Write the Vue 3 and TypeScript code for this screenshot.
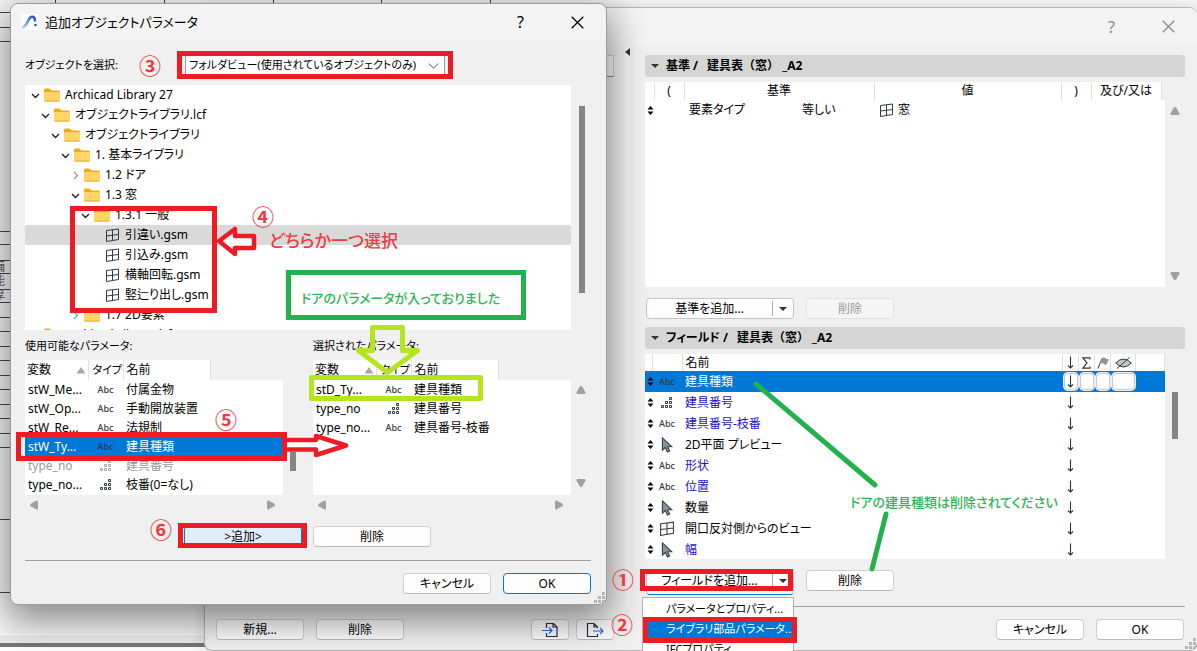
<script setup lang="ts">
import { ref } from 'vue'

type Kind = 'abc' | 'dots' | 'cursor' | 'window'

interface TreeNode {
  label: string
  level: number
  state: 'open' | 'closed' | 'leaf'
  selected?: boolean
}

interface Param {
  variable: string
  kind: Kind
  name: string
  selected?: boolean
  disabled?: boolean
}

interface Field {
  kind: Kind
  name: string
  linked: boolean
  selected?: boolean
}

const tree: TreeNode[] = [
  { label: 'Archicad Library 27', level: 0, state: 'open' },
  { label: 'オブジェクトライブラリ.lcf', level: 1, state: 'open' },
  { label: 'オブジェクトライブラリ', level: 2, state: 'open' },
  { label: '1. 基本ライブラリ', level: 3, state: 'open' },
  { label: '1.2 ドア', level: 4, state: 'closed' },
  { label: '1.3 窓', level: 4, state: 'open' },
  { label: '1.3.1 一般', level: 5, state: 'open' },
  { label: '引違い.gsm', level: 6, state: 'leaf', selected: true },
  { label: '引込み.gsm', level: 6, state: 'leaf' },
  { label: '横軸回転.gsm', level: 6, state: 'leaf' },
  { label: '竪辷り出し.gsm', level: 6, state: 'leaf' },
  { label: '1.7 2D要素', level: 4, state: 'closed' },
  { label: 'Archicad Library.lcf', level: 0, state: 'closed' },
]

const available: Param[] = [
  { variable: 'stW_Me...', kind: 'abc', name: '付属金物' },
  { variable: 'stW_Op...', kind: 'abc', name: '手動開放装置' },
  { variable: 'stW_Re...', kind: 'abc', name: '法規制' },
  { variable: 'stW_Ty...', kind: 'abc', name: '建具種類', selected: true },
  { variable: 'type_no', kind: 'dots', name: '建具番号', disabled: true },
  { variable: 'type_no...', kind: 'dots', name: '枝番(0=なし)' },
]

const chosen: Param[] = [
  { variable: 'stD_Ty...', kind: 'abc', name: '建具種類' },
  { variable: 'type_no', kind: 'dots', name: '建具番号' },
  { variable: 'type_no...', kind: 'abc', name: '建具番号-枝番' },
]

const panes = [
  { title: '使用可能なパラメータ:', rows: available, thumb: true },
  { title: '選択されたパラメータ:', rows: chosen, thumb: false },
]

const fields: Field[] = [
  { kind: 'abc', name: '建具種類', linked: true, selected: true },
  { kind: 'dots', name: '建具番号', linked: true },
  { kind: 'abc', name: '建具番号-枝番', linked: true },
  { kind: 'cursor', name: '2D平面 プレビュー', linked: false },
  { kind: 'abc', name: '形状', linked: true },
  { kind: 'abc', name: '位置', linked: true },
  { kind: 'cursor', name: '数量', linked: false },
  { kind: 'window', name: '開口反対側からのビュー', linked: false },
  { kind: 'cursor', name: '幅', linked: true },
]

const view = ref('folder')
const rulesY = [12, 27, 41, 231, 244, 260, 273, 289, 302, 317, 331, 346, 360, 375, 389, 404, 418, 433, 447, 519, 592]
const rulesX = [55, 164, 273, 381, 490]
</script>

<template>
  <div class="desktop">
    <svg class="defs" width="0" height="0" aria-hidden="true">
      <symbol id="i-window" viewBox="0 0 15 14">
        <path d="M1.500 2.500 13.500 1v10.500L1.500 13.500zM7.500 1.800v10.800M1.500 8l12-1.500" fill="none" stroke="#2f3b45" stroke-width="1" />
      </symbol>
      <symbol id="i-dots" viewBox="0 0 12 12">
        <path d="M8.5.5h2v2h-2zM8.5 4.5h2v2h-2zM4.5 4.5h2v2h-2zM8.5 8.5h2v2h-2zM4.5 8.5h2v2h-2zM.5 8.5h2v2h-2z" fill="none" stroke="currentColor" stroke-width="1" />
      </symbol>
      <symbol id="i-cursor" viewBox="0 0 12 14">
        <path d="M2 .8v10.700l2.500-2.300 1.900 4 2-1-1.900-3.700h3.600z" fill="#8b9399" stroke="#3c464e" stroke-width="1" />
      </symbol>
      <symbol id="i-folder" viewBox="0 0 16 14">
        <path d="M0 2Q0 .5 1.500.5H5.500L7.500 2.500H14.500Q16 2.500 16 4V6H0z" fill="#f0ab0c" />
        <path d="M0 5Q0 4 1 4H15Q16 4 16 5V12Q16 13.500 14.500 13.500H1.500Q0 13.500 0 12z" fill="#ffd567" />
        <path d="M.5 13H15.500" stroke="#e8ab2c" stroke-width="1" />
      </symbol>
      <symbol id="i-sort" viewBox="0 0 7 9">
        <path d="M3.500 0 6.500 3.500H.5zM3.500 9 .5 5.500h6z" fill="#000" />
      </symbol>
      <symbol id="i-down" viewBox="0 0 7 13">
        <path d="M3.500.5v11M1 9.500l2.500 2.500L6 9.500" fill="none" stroke="#2a3742" stroke-width="1.100" />
      </symbol>
      <symbol id="i-tri" viewBox="0 0 10 8">
        <path d="M5 0Q6 .2 6.500 1L9.500 6.500Q9.500 8 8.500 8H1.500Q.5 8 .5 6.500L3.500 1Q4 .2 5 0z" fill="#a0a0a0" />
      </symbol>
      <symbol id="i-grip" viewBox="0 0 12 12">
        <path d="M8 0h3v3H8zM4 4h3v3H4zM8 4h3v3H8zM0 8h3v3H0zM4 8h3v3H4zM8 8h3v3H8z" fill="#b5b5b5" />
      </symbol>
      <symbol id="i-x" viewBox="0 0 13 13">
        <path d="M.7.7 12.300 12.300M12.300.7.7 12.300" fill="none" stroke="currentColor" stroke-width="1.300" />
      </symbol>
      <linearGradient id="logo-ink" x1="0" y1="1" x2="1" y2="0">
        <stop offset="0" stop-color="#b9cdf5" />
        <stop offset="0.600" stop-color="#5584de" />
        <stop offset="1" stop-color="#2350b4" />
      </linearGradient>
    </svg>

    <div class="sheet" aria-hidden="true">
      <svg class="sheet-lines">
        <path v-for="y in rulesY" :key="'y' + y" :d="`M0 ${y + 0.5}H12`" />
        <path v-for="x in rulesX" :key="'x' + x" :d="`M${x + 0.5} 0V12`" />
      </svg>
      <div class="sheet-text"><span>備</span><span>能</span><span>厚</span></div>
      <div class="sheet-foot"></div>
    </div>

    <section class="dialog back" aria-label="一覧表設定">
      <header class="titlebar">
        <span class="grow"></span>
        <button class="cap" type="button" aria-label="ヘルプ">?</button>
        <button class="cap" type="button" aria-label="閉じる"><svg width="13" height="13"><use href="#i-x" /></svg></button>
      </header>
      <div class="back-body">
        <div class="side"><input class="stub" type="text" aria-label="検索" /></div>
        <div class="splitter"><svg width="5" height="8" viewBox="0 0 5 8"><path d="M5 0v8L0 4z" fill="#333" /></svg></div>
        <div class="settings">
          <h2 class="bar"><i class="caret"></i><span>基準 /</span><span class="full">建具表（窓） _A2</span></h2>
          <div class="area">
            <div class="sheetbox">
              <table class="criteria">
                <colgroup><col class="w9" /><col class="w30" /><col class="w113" /><col class="w77" /><col /><col class="w30" /><col class="w70" /><col class="w4" /></colgroup>
                <thead>
                  <tr><th></th><th>(</th><th colspan="2">基準</th><th>値</th><th>)</th><th>及び/又は</th><th class="blank"></th></tr>
                </thead>
                <tbody>
                  <tr>
                    <td class="grab"><svg width="7" height="9"><use href="#i-sort" /></svg></td>
                    <td></td><td class="pad">要素タイプ</td><td class="pad">等しい</td>
                    <td class="pad"><span class="val"><svg width="15" height="14"><use href="#i-window" /></svg>窓</span></td>
                    <td></td><td></td><td></td>
                  </tr>
                </tbody>
              </table>
            </div>
            <div class="vscroll ends">
              <svg width="10" height="8"><use href="#i-tri" /></svg>
              <svg class="flip" width="10" height="8"><use href="#i-tri" /></svg>
            </div>
          </div>
          <div class="actions">
            <div class="split"><button type="button">基準を追加...</button><button class="drop" type="button" aria-label="基準の種類"><i class="caret"></i></button></div>
            <button class="btn" type="button" disabled>削除</button>
          </div>
          <h2 class="bar"><i class="caret"></i><span>フィールド /</span><span class="full">建具表（窓） _A2</span></h2>
          <div class="area">
            <div class="sheetbox">
              <table class="fields">
                <colgroup><col class="w7" /><col class="w30" /><col /><col class="w16" /><col class="w16" /><col class="w16" /><col class="w25" /><col class="w28" /></colgroup>
                <thead>
                  <tr>
                    <th></th><th></th><th class="name">名前</th>
                    <th aria-label="並べ替え"><svg width="7" height="13"><use href="#i-down" /></svg></th>
                    <th aria-label="合計"><svg width="9" height="12" viewBox="0 0 9 12"><path d="M8 2.500V.8H.8L5 6 .8 11.200H8V9.500" fill="none" stroke="#2a3742" stroke-width="1.200" /></svg></th>
                    <th aria-label="フラグ"><svg width="12" height="12" viewBox="0 0 12 12"><path d="M1 11.500 5 1.500" stroke="#2a3742" stroke-width="1" /><path d="M5 1q2-1.200 3.500.2T12 2L9.500 7.500Q8 8 6.500 6.800T2.800 6.500z" fill="#8e959a" /></svg></th>
                    <th aria-label="非表示"><svg width="17" height="12" viewBox="0 0 17 12"><path d="M.7 6Q8.500-2 16.300 6 8.500 14 .7 6z" fill="#c4c7c9" stroke="#2a3742" /><path d="M2 11.500 14.500.5" stroke="#2a3742" /></svg></th>
                    <th></th>
                  </tr>
                </thead>
                <tbody>
                  <tr v-for="f in fields" :key="f.name" :class="{ sel: f.selected, linked: f.linked }">
                    <td class="grab"><svg width="7" height="9"><use href="#i-sort" /></svg></td>
                    <td class="mid kind">
                      <span v-if="f.kind === 'abc'" class="abc">Abc</span>
                      <svg v-else-if="f.kind === 'dots'" width="12" height="12"><use href="#i-dots" /></svg>
                      <svg v-else-if="f.kind === 'cursor'" width="14" height="16"><use href="#i-cursor" /></svg>
                      <svg v-else width="16" height="15"><use href="#i-window" /></svg>
                    </td>
                    <td class="name">{{ f.name }}</td>
                    <td class="mid">
                      <button v-if="f.selected" class="cell" type="button" aria-label="昇順"><svg width="7" height="13"><use href="#i-down" /></svg></button>
                      <svg v-else width="7" height="13"><use href="#i-down" /></svg>
                    </td>
                    <td><button v-if="f.selected" class="cell" type="button" aria-label="合計"></button></td>
                    <td><button v-if="f.selected" class="cell" type="button" aria-label="フラグ"></button></td>
                    <td><button v-if="f.selected" class="cell" type="button" aria-label="非表示"></button></td>
                    <td></td>
                  </tr>
                </tbody>
              </table>
            </div>
            <div class="vscroll"><i class="thumb fields-thumb"></i></div>
          </div>
          <div class="actions">
            <div class="split active">
              <button type="button">フィールドを追加...</button><button class="drop" type="button" aria-label="フィールドの種類"><i class="caret"></i></button>
              <ul class="menu">
                <li><button type="button">パラメータとプロパティ...</button></li>
                <li><button class="on" type="button">ライブラリ部品パラメータ...</button></li>
                <li><button type="button">IFCプロパティ...</button></li>
              </ul>
            </div>
            <button class="btn" type="button">削除</button>
          </div>
          <hr />
        </div>
      </div>
      <footer class="back-foot">
        <button class="btn" type="button">新規...</button>
        <button class="btn" type="button">削除</button>
        <button class="btn icon first" type="button" aria-label="読み込み">
          <svg width="17" height="16" viewBox="0 0 17 16"><path d="M4.500 6V1.500h7l3.500 3.500v9.500H4.500V11M11 1.500V5h4" fill="none" stroke="#26333d" stroke-width="1.200" /><path d="M0 8.500h10M7 5.500l3 3-3 3" fill="none" stroke="#1f6fe0" stroke-width="1.200" /></svg>
        </button>
        <button class="btn icon" type="button" aria-label="書き出し">
          <svg width="18" height="16" viewBox="0 0 18 16"><path d="M11.500 6V5L8 1.500H1.500v13h10V12M8 1.500V5h3.500" fill="none" stroke="#26333d" stroke-width="1.200" /><path d="M7 9h10M14 6l3 3-3 3" fill="none" stroke="#1f6fe0" stroke-width="1.200" /></svg>
        </button>
        <span class="grow"></span>
        <button class="btn" type="button">キャンセル</button>
        <button class="btn" type="button">OK</button>
      </footer>
      <svg class="grip" width="12" height="12"><use href="#i-grip" /></svg>
    </section>

    <section class="dialog front" aria-labelledby="front-title">
      <header class="titlebar">
        <svg class="logo" width="17" height="16" viewBox="0 0 17 16"><rect width="17" height="16" fill="#fbfcfe" /><path d="M2 13.500C5 12 6 9 7.500 6 9.500 1.500 13.500 1.500 14 6.500" fill="none" stroke="url(#logo-ink)" stroke-width="2.600" stroke-linecap="round" /><circle cx="14.500" cy="11" r="1.200" fill="#1d3f94" /></svg>
        <h1 id="front-title">追加オブジェクトパラメータ</h1>
        <button class="cap" type="button" aria-label="ヘルプ">?</button>
        <button class="cap" type="button" aria-label="閉じる"><svg width="13" height="13"><use href="#i-x" /></svg></button>
      </header>
      <div class="front-body">
        <div class="pick">
          <label for="view">オブジェクトを選択:</label>
          <div class="selectbox">
            <select id="view" v-model="view"><option value="folder">フォルダビュー(使用されているオブジェクトのみ)</option></select>
            <svg width="11" height="6" viewBox="0 0 11 6"><path d="M.8.5 5.500 5.200 10.200.5" fill="none" stroke="#555" /></svg>
          </div>
        </div>
        <div class="area">
          <ul class="tree">
            <li v-for="(n, i) in tree" :key="i" :class="{ sel: n.selected }" :style="{ paddingLeft: n.level * 10 + 6 + 'px' }">
              <svg v-if="n.state === 'open'" class="chev" width="9" height="9" viewBox="0 0 9 9"><path d="M1 3l3.500 3.500L8 3" fill="none" stroke="#222" stroke-width="1.400" /></svg>
              <svg v-else-if="n.state === 'closed'" class="chev" width="9" height="9" viewBox="0 0 9 9"><path d="M3 1l3.500 3.500L3 8" fill="none" stroke="#999" stroke-width="1.300" /></svg>
              <svg v-if="n.state === 'leaf'" class="leaf" width="15" height="14"><use href="#i-window" /></svg>
              <svg v-else class="folder" width="16" height="14"><use href="#i-folder" /></svg>
              {{ n.label }}
            </li>
          </ul>
          <div class="vscroll"><i class="thumb tree-thumb"></i></div>
        </div>
        <div class="panes">
          <div v-for="p in panes" :key="p.title" class="pane">
            <h2>{{ p.title }}</h2>
            <div class="area">
              <div class="list">
                <table class="params">
                  <colgroup><col class="w63" /><col class="w35" /><col class="w87" /><col /></colgroup>
                  <thead>
                    <tr><th><span class="sorted">変数<svg width="10" height="8" viewBox="0 0 10 8"><path d="M5 1 9.500 7.500h-9z" fill="#a8a8a8" /></svg></span></th><th>タイプ</th><th>名前</th><th class="none"></th></tr>
                  </thead>
                  <tbody>
                    <tr v-for="r in p.rows" :key="r.variable" :class="{ sel: r.selected, off: r.disabled }">
                      <td>{{ r.variable }}</td>
                      <td class="mid kind"><span v-if="r.kind === 'abc'" class="abc">Abc</span><svg v-else width="12" height="12"><use href="#i-dots" /></svg></td>
                      <td colspan="2">{{ r.name }}</td>
                    </tr>
                  </tbody>
                </table>
              </div>
              <div class="vscroll" :class="{ ends: !p.thumb }">
                <i v-if="p.thumb" class="thumb list-thumb"></i>
                <template v-else>
                  <svg width="10" height="8"><use href="#i-tri" /></svg>
                  <svg class="flip" width="10" height="8"><use href="#i-tri" /></svg>
                </template>
              </div>
            </div>
            <div class="hscroll">
              <svg class="left" width="10" height="8"><use href="#i-tri" /></svg>
              <svg class="right" width="10" height="8"><use href="#i-tri" /></svg>
            </div>
          </div>
        </div>
        <div class="transfer">
          <button class="btn add" type="button">&gt;追加&gt;</button>
          <button class="btn" type="button">削除</button>
        </div>
        <hr />
        <div class="confirm">
          <button class="btn" type="button">キャンセル</button>
          <button class="btn primary" type="button">OK</button>
        </div>
      </div>
      <svg class="grip" width="12" height="12"><use href="#i-grip" /></svg>
    </section>

    <svg class="marks" aria-hidden="true">
      <g fill="none" stroke="#ed1c24" stroke-width="5">
        <rect x="179.500" y="53.500" width="271" height="23" />
        <rect x="72.500" y="208.500" width="142" height="102" />
        <rect x="18.500" y="434.500" width="266" height="24" />
        <rect x="180.500" y="525.500" width="124" height="20" />
        <rect x="642.500" y="571.500" width="148" height="17" />
        <rect x="645.500" y="619.500" width="149" height="21" />
      </g>
      <path d="M219 241l16-12v7h19v12h-19v6z" fill="#fff" stroke="#ed1c24" stroke-width="4.500" stroke-linejoin="round" />
      <path d="M287 440h29v-4l30 9.500-30 9.500v-5.500h-29" fill="#fff" stroke="#ed1c24" stroke-width="4.500" stroke-linejoin="round" />
      <rect x="288.500" y="272.500" width="235" height="45" fill="#fff" stroke="#22b14c" stroke-width="5" />
      <g fill="none" stroke="#b5e61d" stroke-width="5" stroke-linejoin="round">
        <rect x="311.500" y="377.500" width="169" height="21" />
        <path d="M372.500 327.500h30v23h15l-30 22-29-22h14z" />
      </g>
      <path d="M756 384 875 485M886 514l-14 55" fill="none" stroke="#22b14c" stroke-width="5" stroke-linecap="round" />
    </svg>
    <span class="num n1">①</span>
    <span class="num n2">②</span>
    <span class="num n3">③</span>
    <span class="num n4">④</span>
    <span class="num n5">⑤</span>
    <span class="num n6">⑥</span>
    <p class="note choose">どちらか一つ選択</p>
    <p class="note door">ドアのパラメータが入っておりました</p>
    <p class="note remove">ドアの建具種類は削除されてください</p>
  </div>
</template>

<style>
body { margin: 0; }
</style>

<style scoped>
.desktop {
  position: relative;
  height: 100vh;
  overflow: hidden;
  background: #f4f4f4;
  color: #000;
  font: 12px/18px "Noto Sans", "Noto Sans CJK JP", sans-serif;
  font-feature-settings: "palt";
}
.desktop * { box-sizing: border-box; }
.defs { position: absolute; }
svg { display: block; flex: none; }
button, select, input { font: inherit; color: inherit; font-feature-settings: inherit; margin: 0; padding: 0; }
h1, h2, p, ul { margin: 0; padding: 0; font-size: inherit; font-weight: 400; list-style: none; }
hr { border: 0; height: 1px; background: #a0a0a0; margin: 0; width: 100%; }
.grow { flex: 1; }

.sheet { position: absolute; inset: 0; background: #f7f7f7; }
.sheet-lines { position: absolute; inset: 0; width: 100%; height: 100%; stroke: #444; fill: none; }
.sheet-text { position: absolute; left: -7px; top: 260px; display: flex; flex-direction: column; line-height: 14px; color: #555; }
.sheet-foot { position: absolute; left: 0; right: 0; bottom: 0; height: 17px; border-top: 1px solid #fff; background: linear-gradient(#ececec 8px, #777 8px, #777 12px, #fff 12px); }

.dialog { position: absolute; display: flex; flex-direction: column; background: #f0f0f0; border: 1px solid #9c9c9c; border-radius: 8px; }
.titlebar { display: flex; align-items: center; background: #f3f3f3; border-radius: 8px 8px 0 0; }
.cap { display: grid; place-items: center; width: 57px; height: 100%; border: 0; background: none; font-size: 16px; }

.back { left: 204px; right: 0; top: 7px; min-height: calc(100vh - 7px); border-right: 0; border-color: #b4b4b4; box-shadow: 0 0 16px rgba(0, 0, 0, 0.15); }
.back .titlebar { height: 37px; color: #8a8a8a; }
.back-body { display: flex; flex: 1; }
.side { width: 420px; padding-top: 10px; }
.stub { display: block; width: 409px; height: 22px; border: 1px solid #d0d0d0; border-bottom-color: #888; background: #fafafa; }
.splitter { width: 5px; padding-top: 3px; background: #f6f6f6; }
.settings { flex: 1; min-width: 0; padding: 10px 12px 0 15px; }
.bar { display: flex; align-items: center; height: 22px; margin-bottom: 5px; padding-left: 6px; border-radius: 3px; background: #d5d5d5; font-weight: 700; white-space: pre; }
.bar .caret { margin-right: 7px; }
.bar .full { margin-left: 9px; font-feature-settings: normal; }
.caret { width: 0; border: 4px solid transparent; border-top-color: #333; border-bottom: 0; }
.settings .area { height: 205px; margin-bottom: 11px; }

.area { display: flex; }
.sheetbox { flex: 1; min-width: 0; background: #fff; overflow: hidden; }
.vscroll { display: flex; flex-direction: column; align-items: center; width: 20px; }
.vscroll.ends { justify-content: space-between; padding: 25px 1px 7px 0; }
.flip { transform: rotate(180deg); }
.thumb { width: 6px; background: #858585; }
.fields-thumb { height: 47px; margin: 38px 0 0 0; }

table { width: 100%; border-collapse: collapse; table-layout: fixed; }
th, td { padding: 0; font-weight: 400; white-space: nowrap; text-align: left; }
.mid > * { margin: 0 auto; }
.grab { padding-left: 2px; overflow: visible; }
.w4 { width: 4px; } .w7 { width: 7px; } .w9 { width: 9px; } .w16 { width: 16px; } .w25 { width: 25px; } .w28 { width: 29px; }
.w30 { width: 30px; } .w35 { width: 35px; } .w63 { width: 63px; } .w70 { width: 70px; } .w77 { width: 77px; } .w87 { width: 87px; } .w113 { width: 113px; }
.criteria th { height: 18px; text-align: center; border-right: 1px solid #e0e0e0; }
.criteria th.blank { border-right: 0; background: #f0f0f0; }
.criteria td { height: 20px; }
.pad { padding-left: 5px; }
.val { display: flex; align-items: center; gap: 4px; }
.fields th { height: 17px; line-height: 16px; border-right: 1px solid #e0e0e0; }
.fields th svg { margin: 0 auto; }
.fields td { height: 21px; line-height: 20px; }
.name { padding-left: 3px; }
.linked { color: #1a10c8; }
.kind { color: #2f3b45; }
.abc { display: block; text-align: center; font-size: 9px; font-weight: 500; }
.sel { background: #0078d7; color: #fff; }
.cell { display: grid; place-items: center; width: calc(100% - 2px); height: 17px; margin: 0 1px; border: 1px solid #c8c8c8; border-radius: 4px; background: #fdfdfd; box-shadow: 0 0 0 1px #efefef; }

.btn { display: grid; place-items: center; width: 88px; height: 21px; line-height: 18px; border: 1px solid #cfcfcf; border-bottom-color: #bbb; border-radius: 4px; background: #fdfdfd; }
.btn:disabled { color: #9a9a9a; background: #f5f5f5; border-color: #e2e2e2; }
.actions { display: flex; align-items: flex-start; gap: 12px; padding-left: 1px; margin-bottom: 8px; }
.split { position: relative; display: flex; width: 148px; height: 21px; border: 1px solid #c4c4c4; border-radius: 4px; background: #fdfdfd; }
.split > button { flex: 1; border: 0; background: none; line-height: 19px; }
.split > .drop { display: grid; place-items: center; flex: none; width: 21px; height: 15px; margin-top: 2px; border-left: 1px solid #aaa; }
.split.active { height: 25px; margin-bottom: -1px; padding-bottom: 4px; border-bottom: 1px solid #0078d7; }
.menu { position: absolute; left: -5px; top: 26px; z-index: 1; width: 152px; padding: 1px; border: 1px solid #b0b0b0; background: #fff; }
.menu button { display: block; width: 100%; height: 20px; padding-left: 22px; border: 0; background: none; text-align: left; white-space: nowrap; font-size: 11px; }
.menu .on { background: #0078d7; color: #fff; }
.settings hr { margin-top: 12px; }
.back-foot { display: flex; align-items: flex-start; gap: 12px; padding: 12px 13px 10px 11px; }
.back-foot .icon { width: 38px; }
.back-foot .first { margin: 0 -5px 0 115px; }
.grip { position: absolute; right: 0; bottom: 0; }

.front { left: 10px; top: 3px; width: 597px; box-shadow: 0 12px 36px 4px rgba(0, 0, 0, 0.45); }
.front .titlebar { height: 36px; padding-left: 10px; }
.front h1 { flex: 1; margin-left: 7px; font-size: 13px; }
.front-body { padding: 12px 15px 10px 14px; }
.pick { display: flex; align-items: center; gap: 52px; height: 26px; margin-bottom: 7px; font-size: 11px; }
.pick label { width: 108px; white-space: nowrap; }
.selectbox { position: relative; display: flex; align-items: center; width: 260px; height: 22px; background: #fff; border: 1px solid #999; }
.selectbox select { width: 100%; height: 100%; padding-left: 3px; border: 0; background: none; appearance: none; }
.selectbox svg { position: absolute; right: 5px; top: 8px; pointer-events: none; }
.tree { flex: 1; height: 245px; overflow: hidden; background: #fff; }
.tree li { display: flex; align-items: center; height: 20px; white-space: nowrap; }
.tree .sel { background: #d9d9d9; color: #000; border-radius: 2px; }
.chev { margin-right: 4px; }
.folder { margin-right: 5px; }
.leaf { margin: 0 5px 0 14px; }
.tree-thumb { height: 187px; margin: 21px 0 0 1px; }
.panes { display: flex; gap: 10px; }
.pane { flex: 0 0 278px; }
.pane h2 { height: 30px; font-size: 11px; line-height: 32px; }
.list { flex: 1; height: 135px; background: linear-gradient(#f0f0f0 20px, #fff 20px); overflow: hidden; }
.params th { height: 20px; padding-left: 2px; background: #fff; border-right: 1px solid #e0e0e0; }
.params th:nth-child(2) { font-size: 11px; padding-left: 4px; }
.params th:nth-child(3) { padding-left: 3px; }
.params .none { background: none; border: 0; }
.params td { height: 19px; padding-left: 3px; line-height: 18px; }
.params .mid { padding: 0; }
.params .off { color: #9a9a9a; }
.params .off .kind { color: #a8a8a8; }
.sorted { display: flex; align-items: center; justify-content: space-between; padding-right: 2px; }
.list-thumb { height: 19px; margin: 92px 0 0 0; }
.pane .ends { padding: 26px 1px 8px 0; }
.hscroll { display: flex; align-items: center; justify-content: space-between; height: 19px; padding: 0 27px 0 4px; }
.left { transform: rotate(-90deg); }
.right { transform: rotate(90deg); }
.transfer { display: flex; gap: 11px; padding: 12px 0 13px 159px; }
.transfer .btn { width: 118px; }
.add { background: #e0eef9; border-color: #0078d7; }
.confirm { display: flex; justify-content: flex-end; gap: 12px; padding-top: 12px; }
.primary { border-color: #0078d7; }

.marks { position: absolute; inset: 0; z-index: 2; width: 100%; height: 100%; pointer-events: none; }
.num { position: absolute; z-index: 3; width: 24px; height: 24px; font-size: 22px; line-height: 24px; font-weight: 700; text-align: center; color: #ee3a43; font-feature-settings: normal; font-family: "Noto Sans CJK JP", sans-serif; }
.n1 { left: 611px; top: 566px; }
.n2 { left: 610px; top: 611px; }
.n3 { left: 138px; top: 52px; }
.n4 { left: 251px; top: 203px; }
.n5 { left: 214px; top: 406px; }
.n6 { left: 149px; top: 516px; }
.note { position: absolute; z-index: 3; white-space: nowrap; font-size: 13px; font-weight: 500; color: #2eb457; font-family: "Noto Sans CJK JP", sans-serif; }
.choose { left: 269px; top: 228px; font-size: 17px; line-height: 24px; color: #ee3a43; }
.door { left: 301px; top: 289px; }
.remove { left: 850px; top: 493px; }
</style>
